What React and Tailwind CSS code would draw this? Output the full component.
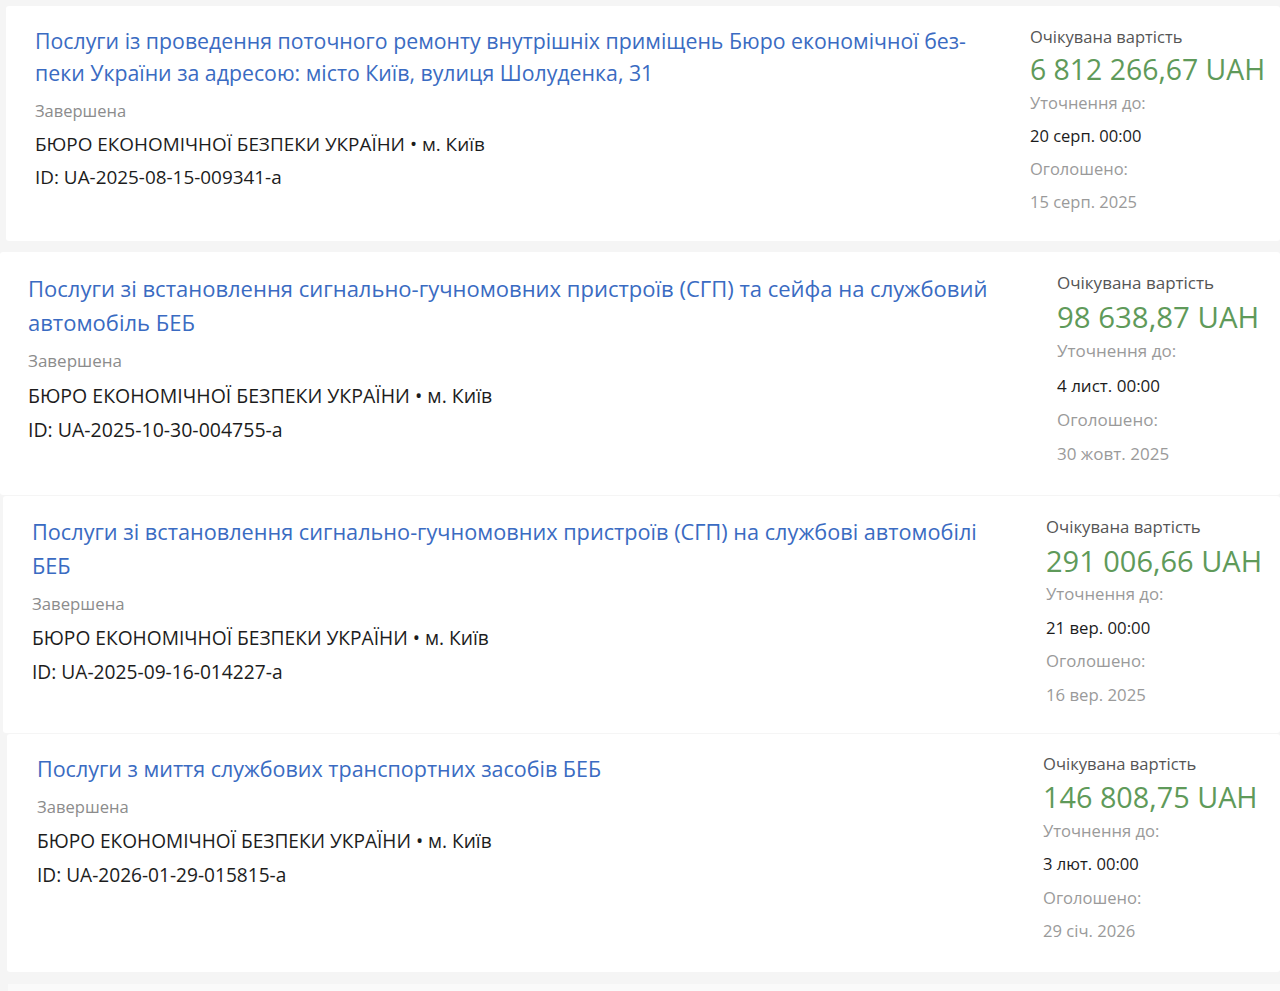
const tenders = [
  {
    title: ['Послуги із проведення поточного ремонту внутрішніх приміщень Бюро економічної без-', 'пеки України за адресою: місто Київ, вулиця Шолуденка, 31'],
    id: 'UA-2025-08-15-009341-a',
    price: '6 812 266,67 UAH',
    until: '20 серп. 00:00',
    announced: '15 серп. 2025',
    card: 'mt-[6px] ml-[6px] h-[235px]',
    left: 'pl-[29px] pt-[19px]',
    right: 'w-[250px] pt-[14px]',
    titleText: 'text-[21.3px] leading-[32px]',
    status: 'mt-[5px] text-[16.5px] leading-[33.5px]',
    org: 'text-[18.9px] leading-[33.5px]',
    small: 'text-[16.5px] leading-[33px]',
    priceText: 'text-[28.4px] leading-[33px]',
  },
  {
    title: ['Послуги зі встановлення сигнально-гучномовних пристроїв (СГП) та сейфа на службовий', 'автомобіль БЕБ'],
    id: 'UA-2025-10-30-004755-a',
    price: '98 638,87 UAH',
    until: '4 лист. 00:00',
    announced: '30 жовт. 2025',
    card: 'mt-[11px] ml-0 h-[243px]',
    left: 'pl-[28px] pt-[19px]',
    right: 'w-[223px] pt-[14px]',
    titleText: 'text-[22px] leading-[34px]',
    status: 'mt-[5px] text-[17px] leading-[34.5px]',
    org: 'text-[19.5px] leading-[34.5px]',
    small: 'text-[17px] leading-[34.2px]',
    priceText: 'text-[29.4px] leading-[34.2px]',
  },
  {
    title: ['Послуги зі встановлення сигнально-гучномовних пристроїв (СГП) на службові автомобілі', 'БЕБ'],
    id: 'UA-2025-09-16-014227-a',
    price: '291 006,66 UAH',
    until: '21 вер. 00:00',
    announced: '16 вер. 2025',
    card: 'mt-[1px] ml-[3px] h-[237px]',
    left: 'pl-[29px] pt-[19px]',
    right: 'w-[234px] pt-[14px]',
    titleText: 'text-[21.7px] leading-[34px]',
    status: 'mt-[4px] text-[16.75px] leading-[34px]',
    org: 'text-[19.2px] leading-[34px]',
    small: 'text-[16.75px] leading-[33.6px]',
    priceText: 'text-[29px] leading-[33.6px]',
  },
  {
    title: ['Послуги з миття службових транспортних засобів БЕБ'],
    id: 'UA-2026-01-29-015815-a',
    price: '146 808,75 UAH',
    until: '3 лют. 00:00',
    announced: '29 січ. 2026',
    card: 'mt-[1px] ml-[7px] h-[238px]',
    left: 'pl-[30px] pt-[18px]',
    right: 'w-[237px] pt-[13px]',
    titleText: 'text-[21.5px] leading-[34px]',
    status: 'mt-[4px] text-[16.6px] leading-[34px]',
    org: 'text-[19.1px] leading-[34px]',
    small: 'text-[16.6px] leading-[33.4px]',
    priceText: 'text-[28.8px] leading-[33.4px]',
  },
];

function TenderCard({ t }) {
  return (
    <div className={`flex bg-white rounded-[3px] ${t.card}`}>
      <div className={`flex-1 min-w-0 ${t.left}`}>
        <a className={`block text-[#3a6bc2] whitespace-nowrap ${t.titleText}`}>
          {t.title.map((line, i) => (
            <span key={i} className="block">{line}</span>
          ))}
        </a>
        <div className={`text-[#8c8c8c] ${t.status}`}>Завершена</div>
        <div className={`text-[#1c1c1c] ${t.org}`}>БЮРО ЕКОНОМІЧНОЇ БЕЗПЕКИ УКРАЇНИ • м. Київ</div>
        <div className={`text-[#1c1c1c] ${t.org}`}>ID: {t.id}</div>
      </div>
      <div className={`shrink-0 ${t.right}`}>
        <div className={`text-[#555555] ${t.small}`}>Очікувана вартість</div>
        <div className={`text-[#5f9a5a] whitespace-nowrap ${t.priceText}`}>{t.price}</div>
        <div className={`text-[#9a9a9a] ${t.small}`}>Уточнення до:</div>
        <div className={`text-[#1c1c1c] ${t.small}`}>{t.until}</div>
        <div className={`text-[#9a9a9a] ${t.small}`}>Оголошено:</div>
        <div className={`text-[#9a9a9a] ${t.small}`}>{t.announced}</div>
      </div>
    </div>
  );
}

export default function App() {
  return (
    <div className="min-h-screen w-[1280px] overflow-hidden bg-[#f5f5f5] font-['Open_Sans',sans-serif]">
      {tenders.map((t) => (
        <TenderCard key={t.id} t={t} />
      ))}
      <div className="mt-[12px] ml-[8px] h-[20px] bg-[#fafafa]" />
    </div>
  );
}
